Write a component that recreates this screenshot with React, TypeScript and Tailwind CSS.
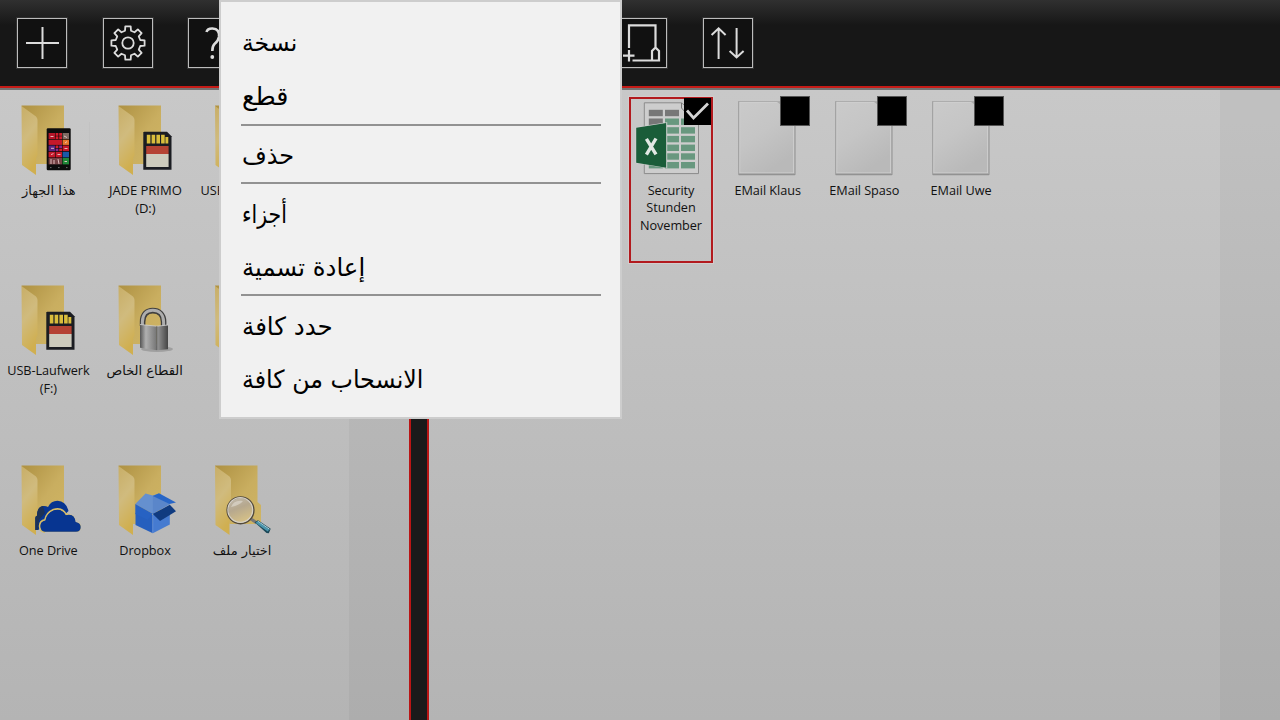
import React from "react";

type MenuEntry = { label: string; row: string; text: string };

function ToolButton({ children }: { children: React.ReactNode }) {
  return (
    <button className="h-[50px] w-[50px] shrink-0 border border-[#bcbcbc] bg-[#111111] outline outline-1 outline-[#303030]">
      <svg viewBox="0 0 50 50" className="-m-px h-[50px] w-[50px]" fill="none" stroke="#dcdcdc" strokeWidth="1.8">
        {children}
      </svg>
    </button>
  );
}

function gearPath(): string {
  const points: string[] = [];
  for (let i = 0; i < 8; i++) {
    const base = (i * Math.PI) / 4 - Math.PI / 2;
    const spots: [number, number][] = [[-0.24, 12.6], [-0.16, 16.8], [0.16, 16.8], [0.24, 12.6]];
    for (const [offset, radius] of spots) {
      const a = base + offset;
      points.push((25 + radius * Math.cos(a)).toFixed(2) + " " + (25 + radius * Math.sin(a)).toFixed(2));
    }
  }
  return "M" + points.join("L") + "Z";
}

function Folder() {
  return (
    <g>
      <path d="M22 5.5H64.5V42L68 45V64H36.5Z" fill="url(#folderBack)" />
      <path d="M22 6L36.5 16.5Q38 18 38 20V55L36.5 58V75L22.5 65Z" fill="url(#folderFront)" />
    </g>
  );
}

function PlainFolder() {
  return (
    <g>
      <path d="M21.5 5.5H64V64H36Z" fill="url(#folderBack)" />
      <path d="M21.5 6L36 16.5Q37.5 18 37.5 20V55L36 58V75L22 65Z" fill="url(#folderFront)" />
    </g>
  );
}

function Phone() {
  const tiles: [number, number, number, number, string][] = [
    [48.6, 33, 6.4, 6, "#b5162a"], [55.6, 33, 2.8, 2.8, "#d41c2c"], [59.2, 33, 2.8, 2.8, "#d41c2c"],
    [55.6, 36.3, 2.8, 2.8, "#d41c2c"], [59.2, 36.3, 2.8, 2.8, "#d41c2c"], [62.6, 33, 6.4, 6, "#7d6a62"],
    [48.6, 39.7, 13.4, 5.2, "#c5182a"], [62.6, 39.7, 6.4, 5.2, "#e8772c"],
    [48.6, 45.5, 6.4, 5.6, "#5b2382"], [55.6, 45.5, 2.8, 2.5, "#d41c2c"], [59.2, 45.5, 2.8, 2.5, "#8a278c"],
    [55.6, 48.6, 2.8, 2.5, "#8a278c"], [59.2, 48.6, 2.8, 2.5, "#d41c2c"], [62.6, 45.5, 6.4, 5.6, "#c5182a"],
    [48.6, 51.8, 6.4, 5.6, "#c5182a"], [55.6, 51.8, 6.4, 5.6, "#c5182a"], [62.6, 51.8, 6.4, 5.6, "#1b58a8"],
    [48.6, 58, 13.4, 6.4, "#744144"], [62.6, 58, 6.4, 6.4, "#1f8738"],
  ];
  return (
    <g>
      <rect x="46.7" y="28.3" width="24" height="42" rx="1.2" fill="#0c0c0c" />
      {tiles.map(([x, y, w, h, color], i) => (
        <rect key={i} x={x} y={y} width={w} height={h} fill={color} />
      ))}
      <path d="M50.5 36.5h3M51 48.3h3M51 54.6l2.5-1M57.5 54.5h3M64 36l3 1.5M64.5 48.5h3M65 43l2-1.5M51 59v5M54 60v4M58 59l1 5M64.5 61.5h2.5" stroke="#e9c9c9" strokeWidth="0.9" />
      <path d="M50 67.6h1.5M58 67.6h1.6M66 67.6h1.5" stroke="#888" strokeWidth="0.8" />
      <path d="M89.5 22V74" stroke="#bfbfbf" strokeWidth="0.6" />
    </g>
  );
}

function SdCard() {
  return (
    <g>
      <path d="M46.3 32.5Q46.3 31.8 47.3 31.8H70L74.5 36.3V69.8H46.3Z" fill="#1b1d22" />
      <path d="M49.8 34.8h3.6v8.6h-3.6zM54.6 34.8h3.6v8.6h-3.6zM59.4 34.8h3.6v8.6h-3.6zM64.1 34.8h3.6v8.6h-3.6zM68.4 37h2.9v6.4h-2.9z" fill="#d9bd3c" />
      <rect x="49.2" y="46" width="22.4" height="8" fill="#b54333" />
      <rect x="49.2" y="54" width="22.4" height="13" fill="#cdcbbd" />
    </g>
  );
}

function Padlock() {
  return (
    <g>
      <ellipse cx="60" cy="69" rx="16" ry="3" fill="#777" opacity="0.45" />
      <path d="M45.6 46V42C45.6 34 50 30.6 55.8 30.6S66.6 34 66.6 42V47" fill="none" stroke="#3f3f3f" strokeWidth="5.6" />
      <path d="M45.4 46V42C45.4 34 50 30.3 55.8 30.3S66.6 34 66.6 42V47" fill="none" stroke="#adadad" strokeWidth="3" />
      <path d="M43 44.5L59.8 46.2V70.3L43 67.8Z" fill="url(#lockFace)" />
      <path d="M59.8 46.2L71 45V69.3L59.8 70.3Z" fill="url(#lockSide)" />
      <path d="M43 44.5L59.8 46.2L71 45" fill="none" stroke="#d0d0d0" strokeWidth="0.8" />
      <path d="M59.8 46.2V70" stroke="#555" strokeWidth="0.8" />
    </g>
  );
}

function Clouds() {
  return (
    <g>
      <path d="M35.3 70V58Q35.3 56 37 55.7Q37 47 43 46Q46 45.7 48 47Q51 40.8 57.5 40.8Q66 41 68.5 51L62 57L38 70Z" fill="#073591" />
      <path d="M35.3 70V58Q35.3 56 37 55.7Q37 47 43 46L45 53L39 60L38 70Z" fill="#1c3257" />
      <path d="M45 72Q39.7 71.5 39.7 66Q39.7 61 45 60Q46 53 53.5 49.6Q62 47 66 54.5Q75 52.5 76 61.5Q81 62.5 81 67Q81 72 76 72Z" fill="#073591" stroke="#d5bb66" strokeWidth="1.9" />
      <path d="M68 53.4Q75.5 53 76.3 61.5Q81.8 62.5 81.8 67Q81.5 72.8 76 72.8H45" fill="none" stroke="#bbb" strokeWidth="1.6" />
      <path d="M45 71.8Q40.4 71.5 40.4 66Q40.4 61.5 45.4 60.6Q46.5 53 54 50.2Q62 48 65.8 55.2Q74.6 53 75.6 62Q80.7 63 80.7 67Q80.7 71.8 76 71.8Z" fill="#073591" />
    </g>
  );
}

function DropboxMark() {
  return (
    <g>
      <path d="M38.5 53L55.8 55V73.2L38.5 65Z" fill="#265fbe" />
      <path d="M55.8 53L72.8 49V64.5L55.8 73.2Z" fill="#467bd0" />
      <path d="M48.5 33.6L55.8 35.6L62 33.4L73 44L55.8 53.8L38.3 44Z" fill="#6590cf" />
      <path d="M55.8 35.6V53.8L73 44Z" fill="#5a86ca" />
      <path d="M38.3 44L55.8 53.8L50.5 59.8L38.3 54Z" fill="#2762c3" />
      <path d="M55.8 36L62 33.2L79 42.4L72.5 44Z" fill="#2866c7" />
      <path d="M55.8 54L72.8 44.8L79 51.2L63 61Z" fill="#103b80" />
      <path d="M55.8 54V73" stroke="#719ce0" strokeWidth="0.6" />
    </g>
  );
}

function Magnifier() {
  return (
    <g>
      <path d="M58 59L64 63" stroke="#777" strokeWidth="3" />
      <path d="M61.6 62.2L65 60.2L77.7 68.8L75.8 73.2L73.5 73Z" fill="#1b4858" />
      <path d="M63.5 62L75.5 70.5" stroke="#4994ac" strokeWidth="2.6" />
      <path d="M65 61.3L76.5 69.2" stroke="#b7dce6" strokeWidth="0.9" />
      <circle cx="47.5" cy="50.3" r="13.2" fill="url(#lens)" stroke="#50483c" strokeWidth="1.8" />
      <circle cx="47.3" cy="50" r="12.4" fill="none" stroke="#d6d1c7" strokeWidth="1.2" />
      <path d="M38 47Q41 39.5 50 41Q47 45 38 47Z" fill="#fff" opacity="0.35" />
    </g>
  );
}

function FolderTile({ label, icon, arabic, scale }: { label: string[]; icon: React.ReactNode; arabic?: boolean; scale?: string }) {
  return (
    <div className="flex h-[180px] w-[96.7px] shrink-0 flex-col items-center pt-[10px]">
      <svg viewBox="0 0 97 80" className="h-[80px] w-[97px] shrink-0">{icon}</svg>
      <div dir={arabic ? "rtl" : "ltr"} className={"whitespace-nowrap text-center leading-[18px] " + (arabic ? "pt-[1.5px] font-['DejaVu_Sans',sans-serif] text-[12.5px] " : "pt-[0.5px] text-[12.7px] tracking-[-0.06px] ") + (scale ?? "")}>
        {label.map((line) => <div key={line}>{line}</div>)}
      </div>
    </div>
  );
}

function DocumentIcon() {
  return (
    <svg viewBox="0 0 97 80" className="h-[80px] w-[97px] shrink-0">
      <rect x="19.3" y="1.2" width="57.2" height="74" rx="0.8" fill="#929292" />
      <rect x="19.3" y="1" width="56.8" height="73" fill="#a4a4a4" />
      <rect x="20.3" y="1.8" width="54.8" height="71.4" fill="#d0d0d0" />
      <rect x="21.2" y="2.7" width="53" height="69.8" fill="url(#paper)" />
      <path d="M58 2L63 5.5V2Z" fill="#aaa" />
    </svg>
  );
}

function ExcelIcon() {
  const rows = [0, 1, 2, 3, 4, 5, 6];
  return (
    <svg viewBox="0 0 97 80" className="h-[80px] w-[97px] shrink-0">
      <path d="M21.3 2.8H58.5L75.5 17V73.6H21.3Z" fill="#cdcdcd" stroke="#8b8b8b" />
      {rows.map((r) => (
        <g key={r}>
          <rect x="25.8" y={9.8 + r * 8.7} width="14" height="6.4" fill={r < 2 ? "#777777" : "#68987f"} />
          <rect x="42" y={9.8 + r * 8.7} width="14" height="6.4" fill={r < 1 ? "#777777" : "#68987f"} />
          <rect x="58" y={9.8 + r * 8.7} width="14" height="6.4" fill={r < 1 ? "#cdcdcd" : "#68987f"} />
        </g>
      ))}
      <path d="M58.5 3V8L64 14V20H70" fill="none" stroke="#777" />
      <path d="M12.6 27.2L44.2 22.2V68.3L12.6 63Z" fill="#d4d4d4" />
      <path d="M13.2 27.7L43.2 22.9V67.7L13.2 62.7Z" fill="#1a5d39" />
      <path d="M23.4 38.8L33 54.4M33 38.5L23.4 54.7" stroke="#e2e8e4" strokeWidth="3.4" />
    </svg>
  );
}

function FileTile({ label, selected }: { label: string[]; selected?: boolean }) {
  return (
    <div className="relative h-[180px] w-[96.7px] shrink-0 px-[6.5px] pt-[7px]">
      <div className={"box-border flex h-[166px] w-[84px] flex-col items-center " + (selected ? "border-2 border-[#b21a1e] pt-px outline outline-1 outline-[#d2cccc]" : "pt-[3px]")}>
        {selected ? <ExcelIcon /> : <DocumentIcon />}
        <div className="whitespace-nowrap pt-[1.5px] text-center text-[12.7px] leading-[17.6px] tracking-[-0.06px]">
          {label.map((line) => <div key={line}>{line}</div>)}
        </div>
      </div>
      <div className={"absolute bg-black " + (selected ? "left-[61.5px] top-2 h-[27px] w-[27px]" : "left-[62px] top-[7px] h-[28px] w-[28px] outline outline-1 outline-[#555]")}>
        {selected && (
          <svg viewBox="0 0 28 28" className="h-7 w-7" fill="none" stroke="#d4d4d4" strokeWidth="2.8">
            <path d="M3 12.5L9.5 20L24 5.5" />
          </svg>
        )}
      </div>
    </div>
  );
}

const divider = " border-b-2 border-[#929292]";

const entries: MenuEntry[] = [
  { label: "نسخة", row: "h-[54px] pt-[1px]", text: "text-[24px] scale-x-[0.98]" },
  { label: "قطع", row: "h-[56px]" + divider, text: "text-[25.4px]" },
  { label: "حذف", row: "h-[58px] pt-[3px]" + divider, text: "text-[24.4px] scale-x-[0.98]" },
  { label: "أجزاء", row: "h-[56px] pt-[4px]", text: "text-[24.6px] scale-x-[0.83]" },
  { label: "إعادة تسمية", row: "h-[56px] pt-[1px]" + divider, text: "text-[25px] scale-x-[0.975]" },
  { label: "حدد كافة", row: "h-[56px] pt-[4px]", text: "text-[25px] scale-x-[0.98]" },
  { label: "الانسحاب من كافة", row: "h-[53px] pt-[1px]", text: "text-[25px] scale-x-[0.95]" },
];

export default function App() {
  return (
    <div className="relative flex h-[720px] w-[1280px] flex-col overflow-hidden bg-[#bebebe] font-['Open_Sans','Noto_Sans','DejaVu_Sans',sans-serif] text-[#111]">
      <svg className="absolute h-0 w-0">
        <defs>
          <linearGradient id="folderBack" x1="0" y1="0" x2="1" y2="1">
            <stop offset="0" stopColor="#ae9142" /><stop offset="0.55" stopColor="#c9ae60" /><stop offset="1" stopColor="#d0b563" />
          </linearGradient>
          <linearGradient id="folderFront" x1="0" y1="0" x2="0.3" y2="1">
            <stop offset="0" stopColor="#c8ae67" /><stop offset="0.5" stopColor="#d0bb7e" /><stop offset="1" stopColor="#d0af50" />
          </linearGradient>
          <linearGradient id="lockFace"><stop stopColor="#555" /><stop offset="0.35" stopColor="#b0b0b0" /><stop offset="1" stopColor="#747474" /></linearGradient>
          <linearGradient id="lockSide"><stop stopColor="#999" /><stop offset="1" stopColor="#454545" /></linearGradient>
          <linearGradient id="lens" x1="0" y1="0" x2="0.4" y2="1"><stop stopColor="#c3bdb2" /><stop offset="0.5" stopColor="#b6a88e" /><stop offset="1" stopColor="#d5c087" /></linearGradient>
          <linearGradient id="paper" x1="0" y1="0" x2="0.5" y2="1"><stop stopColor="#cacaca" /><stop offset="0.5" stopColor="#c5c5c5" /><stop offset="1" stopColor="#b9b9b9" /></linearGradient>
        </defs>
      </svg>
      <header className="flex h-[90px] shrink-0 border-b-2 border-[#737373] bg-[linear-gradient(#303030,#171717_25px,#171717)]">
        <div className="flex h-[88px] w-full border-b-2 border-[#c51b17] pl-[17px] pt-[18px]">
          <div className="flex gap-[35.6px]">
            <ToolButton><path d="M9 25H42M25.5 9V41" strokeWidth="2" /></ToolButton>
            <ToolButton><path d={gearPath()} strokeLinejoin="round" /><circle cx="25" cy="25" r="5.7" /></ToolButton>
            <ToolButton><path d="M18.5 14Q19.5 10.3 24.5 10.5Q32 11 31 19Q30.3 23 26.5 26Q24.3 28 24.3 33" strokeWidth="2.6" /><circle cx="24.3" cy="39" r="1.9" fill="#ddd" stroke="none" /></ToolButton>
          </div>
          <div className="ml-[379px] flex gap-[35.6px]">
            <ToolButton><path d="M12 30V7.3H38.5V30M6 37.7H17.5M12 32V43.5M15.5 42.5H35M35 42.5V33L38.5 29.5L42 33V42.5Z" strokeWidth="2.2" /></ToolButton>
            <ToolButton><path d="M15.6 41V11M8.6 17L15.6 10.3L22.6 17M33.6 10V40M26.6 33L33.6 39.5L40.6 33" strokeWidth="2" /></ToolButton>
          </div>
        </div>
      </header>
      <main className="flex h-[630px]">
        <section className="flex w-[409px] shrink-0 justify-between bg-[linear-gradient(#c8c8c8,#b4b4b4)]">
          <div className="grid h-[540px] w-[290px] grid-cols-[96.7px_96.7px_96.7px] grid-rows-[180px_180px_180px]">
            <FolderTile arabic label={["هذا الجهاز"]} scale="scale-x-[1.04]" icon={<><PlainFolder /><Phone /></>} />
            <FolderTile label={["JADE PRIMO", "(D:)"]} scale="scale-x-[1.03]" icon={<><PlainFolder /><SdCard /></>} />
            <FolderTile label={["USB-Laufwerk"]} icon={<Folder />} />
            <FolderTile label={["USB-Laufwerk", "(F:)"]} icon={<><PlainFolder /><SdCard /></>} />
            <FolderTile arabic label={["القطاع الخاص"]} scale="scale-x-[1.04]" icon={<><PlainFolder /><Padlock /></>} />
            <FolderTile label={[]} icon={<Folder />} />
            <FolderTile label={["One Drive"]} icon={<><PlainFolder /><Clouds /></>} />
            <FolderTile label={["Dropbox"]} icon={<><PlainFolder /><DropboxMark /></>} />
            <FolderTile arabic label={["اختيار ملف"]} scale="scale-x-[1.04]" icon={<><Folder /><Magnifier /></>} />
          </div>
          <div className="w-[60px] bg-black/[0.035]" />
        </section>
        <div className="w-5 shrink-0 border-x-2 border-[#b91515] bg-[#1a1a1a]" />
        <section className="flex flex-1 justify-between bg-[linear-gradient(#c8c8c8,#b4b4b4)]">
          <div className="flex pl-[193.5px]">
            <FileTile selected label={["Security", "Stunden", "November"]} />
            <FileTile label={["EMail Klaus"]} />
            <FileTile label={["EMail Spaso"]} />
            <FileTile label={["EMail Uwe"]} />
          </div>
          <div className="w-[60px] bg-black/[0.035]" />
        </section>
      </main>
      <div className="absolute left-[219px] top-0 flex h-[419px] w-[403px] flex-col border-2 border-[#cdcdcd] bg-[#f1f1f1] pl-[20px] pr-[19px] pt-[14px] text-black">
        {entries.map((entry) => (
          <div key={entry.label} className={"shrink-0 pl-px " + entry.row}>
            <span dir="rtl" className={"inline-block origin-left whitespace-nowrap font-['DejaVu_Sans',sans-serif] leading-[53px] " + entry.text}>{entry.label}</span>
          </div>
        ))}
      </div>
    </div>
  );
}
